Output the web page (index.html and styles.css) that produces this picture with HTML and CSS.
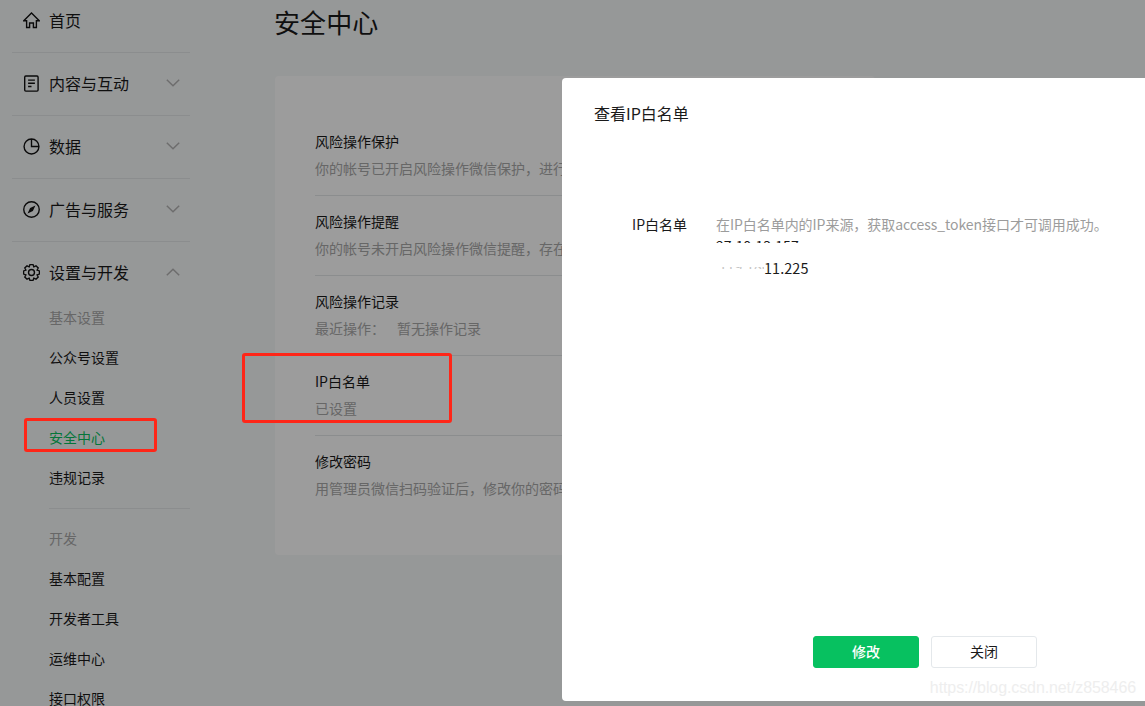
FILE: index.html
```html
<!DOCTYPE html>
<html lang="zh-CN">
<head>
<meta charset="utf-8">
<title>安全中心</title>
<link rel="stylesheet" href="styles.css">
</head>
<body>
<div class="page">
  <aside class="sidebar">
    <div class="nav-group">
      <div class="nav-head">
        <svg class="nav-icon" viewBox="0 0 16 16"><path d="M8 1 15.300 8.200H12.600V14.600H9.800V10.400H6.200V14.600H3.400V8.200H.7z"/></svg>
        <span class="nav-label">首页</span>
      </div>
    </div>
    <div class="nav-group">
      <div class="nav-head">
        <svg class="nav-icon" viewBox="0 0 16 16"><rect x="1.600" y="1" width="12.600" height="14.200" rx="1"/><path d="M4.800 4.800h6.400M4.800 7.800h6.400M4.800 10.800h3.200"/></svg>
        <span class="nav-label">内容与互动</span>
        <svg class="chev" viewBox="0 0 14 8"><path d="M.8.8 7 6.800 13.200.8"/></svg>
      </div>
    </div>
    <div class="nav-group">
      <div class="nav-head">
        <svg class="nav-icon" viewBox="0 0 16 16"><circle cx="8" cy="8" r="7"/><path d="M8 1v7h7"/></svg>
        <span class="nav-label">数据</span>
        <svg class="chev" viewBox="0 0 14 8"><path d="M.8.8 7 6.800 13.200.8"/></svg>
      </div>
    </div>
    <div class="nav-group">
      <div class="nav-head">
        <svg class="nav-icon" viewBox="0 0 16 16"><circle cx="8" cy="8" r="7.300"/><path class="solid" d="M11.700 4.300 9.300 9.300 4.300 11.700 6.700 6.700z"/></svg>
        <span class="nav-label">广告与服务</span>
        <svg class="chev" viewBox="0 0 14 8"><path d="M.8.8 7 6.800 13.200.8"/></svg>
      </div>
    </div>
    <div class="nav-group nav-open">
      <div class="nav-head">
        <svg class="nav-icon" viewBox="0 0 16 16"><polygon points="15.46,6.55 15.46,9.45 13.27,10.18 14.3,12.25 12.25,14.3 10.18,13.27 9.45,15.46 6.55,15.46 5.82,13.27 3.75,14.3 1.7,12.25 2.73,10.18 .54,9.45 .54,6.55 2.73,5.82 1.7,3.75 3.75,1.7 5.82,2.73 6.55,.54 9.45,.54 10.18,2.73 12.25,1.7 14.3,3.75 13.27,5.82"/><circle cx="8" cy="8" r="2.800"/></svg>
        <span class="nav-label">设置与开发</span>
        <svg class="chev" viewBox="0 0 14 8"><path d="M.8 7.200 7 1.200l6.200 6"/></svg>
      </div>
      <div class="sub-title sub-first">基本设置</div>
      <div class="sub-item">公众号设置</div>
      <div class="sub-item">人员设置</div>
      <div class="sub-item sub-active">安全中心</div>
      <div class="sub-item">违规记录</div>
      <div class="sub-divider"></div>
      <div class="sub-title">开发</div>
      <div class="sub-item">基本配置</div>
      <div class="sub-item">开发者工具</div>
      <div class="sub-item">运维中心</div>
      <div class="sub-item">接口权限</div>
    </div>
  </aside>

  <main class="content">
    <h1 class="page-title">安全中心</h1>
    <section class="card">
      <div class="row">
        <div class="row-title">风险操作保护</div>
        <div class="row-desc">你的帐号已开启风险操作微信保护，进行风险操作时需要验证</div>
      </div>
      <div class="row">
        <div class="row-title">风险操作提醒</div>
        <div class="row-desc">你的帐号未开启风险操作微信提醒，存在风险操作时无法通知</div>
      </div>
      <div class="row">
        <div class="row-title">风险操作记录</div>
        <div class="row-desc"><span class="row-key">最近操作：</span>暂无操作记录</div>
      </div>
      <div class="row">
        <div class="row-title">IP白名单</div>
        <div class="row-desc">已设置</div>
      </div>
      <div class="row">
        <div class="row-title">修改密码</div>
        <div class="row-desc">用管理员微信扫码验证后，修改你的密码信息</div>
      </div>
    </section>
  </main>

  <div class="mask"></div>

  <div class="mark mark-nav"></div>
  <div class="mark mark-row"></div>

  <div class="dialog">
    <div class="dialog-title">查看IP白名单</div>
    <div class="dialog-body">
      <div class="field-label">IP白名单</div>
      <div class="field-value">
        <div class="field-tip">在IP白名单内的IP来源，获取access_token接口才可调用成功。</div>
        <div class="ip-cut"><div class="ip-line">27.19.13.157</div></div>
        <div class="ip-row"><span class="ip-faded"><span class="ip-faded-text">119.186.</span></span><span class="ip-line">11.225</span></div>
      </div>
    </div>
    <div class="dialog-foot">
      <button class="btn btn-primary">修改</button>
      <button class="btn btn-plain">关闭</button>
    </div>
  </div>

  <div class="watermark">https://blog.csdn.net/z858466</div>
</div>
</body>
</html>
```

FILE: styles.css
```css
* { box-sizing: border-box; }
html, body { margin: 0; padding: 0; height: 100%; }
body {
  font-family: "Noto Sans CJK SC", "Noto Sans", sans-serif;
  background: #f6f8f9;
  color: #1a1a1a;
  overflow: hidden;
}
.page {
  position: relative;
  width: 1145px;
  height: 706px;
  overflow: hidden;
  display: flex;
  align-items: flex-start;
}

/* sidebar */
.sidebar { width: 275px; flex: none; padding: 0 85px 0 12px; margin-top: -10px; }
.nav-group { border-bottom: 1px solid #e4e6e8; height: 63px; padding-top: 14px; }
.nav-open { border-bottom: 0; height: auto; }
.nav-head { display: flex; align-items: center; height: 32px; padding-left: 11px; }
.nav-icon { width: 17px; height: 17px; flex: none; fill: none; stroke: #111; stroke-width: 1.300; }
.nav-icon .solid { fill: #111; stroke: none; }
.nav-label { margin-left: 9px; font-size: 16px; line-height: 32px; flex: 1; }
.chev { width: 14px; height: 8px; flex: none; margin-right: 10px; fill: none; stroke: #b3b3b3; stroke-width: 1.500; }
.sub-title, .sub-item { font-size: 14px; line-height: 40px; height: 40px; padding-left: 37px; }
.sub-title { color: #a8a8a8; }
.sub-first { margin-top: 9px; }
.sub-active { color: #07c160; }
.sub-divider { height: 1px; background: #e4e6e8; margin: 11px 0 9px 37px; }

/* content */
.content { flex: 1; min-width: 0; margin-left: -1px; }
.page-title { margin: 0; padding-top: 2px; font-size: 26px; font-weight: 400; line-height: 40px; letter-spacing: .1px; }
.card {
  margin: 34px 0 0 1px;
  width: 600px;
  height: 479px;
  padding: 40px;
  background: #fff;
  border-radius: 4px;
  overflow: hidden;
}
.row { height: 80px; padding-top: 12px; border-bottom: 1px solid #e4e6e8; white-space: nowrap; }
.row:last-child { border-bottom: 0; }
.row-title { font-size: 14px; line-height: 26px; }
.row-desc { font-size: 14px; line-height: 28px; color: #a8a8a8; }
.row-key { display: inline-block; width: 82px; }

/* overlay */
.mask { position: absolute; inset: 0; background: rgba(0, 0, 0, .39); }
.mark { position: absolute; border: 3px solid #ff2618; border-radius: 3px; }
.mark-nav { left: 24px; top: 418px; width: 133px; height: 34px; }
.mark-row { left: 242px; top: 353px; width: 210px; height: 70px; }

/* dialog */
.dialog {
  position: absolute;
  left: 562px;
  top: 78px;
  width: 583px;
  height: 623px;
  background: #fff;
  border-radius: 4px 0 0 4px;
  display: flex;
  flex-direction: column;
}
.dialog-title { padding: 23px 32px 0; font-size: 16px; line-height: 24px; }
.dialog-body { display: flex; flex: 1; padding-top: 88px; font-size: 14px; }
.field-label { width: 125px; text-align: right; line-height: 22px; }
.field-value { margin-left: 29px; white-space: nowrap; }
.field-tip { line-height: 22px; color: #9c9c9c; letter-spacing: -.05px; }
.ip-line { line-height: 22px; letter-spacing: .1px; }
.ip-cut { height: 8px; overflow: hidden; }
.ip-row { display: flex; align-items: center; margin-top: 14px; height: 22px; font-size: 14.4px; }
.ip-faded { display: block; width: 48px; height: 2px; overflow: hidden; font-size: 14px; }
.ip-faded-text { display: block; margin-top: -12px; padding-left: 3px; line-height: 22px; color: #c4c4c4; }
.dialog-foot { display: flex; justify-content: flex-start; gap: 12px; padding: 0 0 33px 251px; }
.btn {
  width: 106px;
  height: 32px;
  border-radius: 3px;
  font: 14px/28px "Noto Sans CJK SC", sans-serif;
  padding: 0 0 2px;
}
.btn-primary { background: #07c160; border: 1px solid #07c160; color: #fff; font-weight: 500; }
.btn-plain { background: #fff; border: 1px solid #e4e8eb; color: #1a1a1a; }

.watermark {
  position: absolute;
  right: 9px;
  top: 679px;
  font: 16px/18px "Liberation Sans", sans-serif;
  letter-spacing: -.1px;
  color: #eeeeee;
  white-space: nowrap;
}
```
